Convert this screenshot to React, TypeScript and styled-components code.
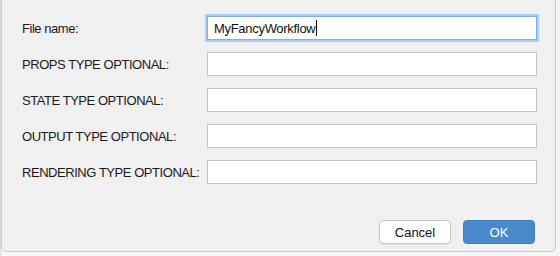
import React from "react";
import styled, { createGlobalStyle } from "styled-components";

const GlobalStyle = createGlobalStyle`
  html, body {
    margin: 0;
    padding: 0;
    background: #f6f6f6;
  }
  body {
    font-family: "Liberation Sans", Arial, sans-serif;
  }
`;

const Page = styled.div`
  width: 560px;
  height: 256px;
  display: flex;
  background: linear-gradient(to right, #dcdcd4 0 1px, #f6f6f6 1px);
`;

const Dialog = styled.div`
  margin-left: 1px;
  width: 555px;
  height: 252px;
  box-sizing: border-box;
  background: #f0f0f0;
  border: 1px solid #c9c9c9;
  border-top: none;
  border-radius: 0 0 5px 5px;
  display: flex;
  flex-direction: column;
  padding: 16px 17px 7px 20px;
`;

const Form = styled.div`
  display: grid;
  grid-template-columns: 185px 330px;
  row-gap: 12px;
  align-items: center;
`;

const Label = styled.label`
  font-size: 13px;
  letter-spacing: -0.45px;
  color: #1a1a1a;
  white-space: nowrap;
  overflow: hidden;
`;

const Input = styled.div<{ $focused?: boolean }>`
  height: 24px;
  box-sizing: border-box;
  background: #fff;
  border: 1px solid ${(p) => (p.$focused ? "#7fb0ec" : "#c4c4c4")};
  box-shadow: ${(p) => (p.$focused ? "0 0 0 2px #a9cdf5" : "none")};
  display: flex;
  align-items: center;
  padding-left: 6px;
  font-size: 13px;
  letter-spacing: -0.3px;
  color: #111;
`;

const Caret = styled.span`
  display: inline-block;
  width: 1px;
  height: 16px;
  background: #111;
  margin-left: 1px;
`;

const Footer = styled.div`
  margin-top: auto;
  display: flex;
  justify-content: flex-end;
  gap: 12px;
  padding-right: 3px;
`;

const Button = styled.button<{ $primary?: boolean }>`
  width: 72px;
  height: 24px;
  border-radius: 4px;
  font-family: "Liberation Sans", Arial, sans-serif;
  font-size: 13px;
  cursor: pointer;
  border: 1px solid ${(p) => (p.$primary ? "#3f7dc0" : "#c6c6c6")};
  background: ${(p) => (p.$primary ? "#4a89ca" : "#fff")};
  color: ${(p) => (p.$primary ? "#fff" : "#111")};
  box-shadow: ${(p) => (p.$primary ? "none" : "0 1px 0 rgba(0,0,0,0.05)")};
`;

const fields = [
  "PROPS TYPE OPTIONAL:",
  "STATE TYPE OPTIONAL:",
  "OUTPUT TYPE OPTIONAL:",
  "RENDERING TYPE OPTIONAL:",
];

export default function App() {
  return (
    <Page>
      <GlobalStyle />
      <Dialog>
        <Form>
          <Label>File name:</Label>
          <Input $focused>
            MyFancyWorkflow
            <Caret />
          </Input>
          {fields.map((f) => (
            <React.Fragment key={f}>
              <Label>{f}</Label>
              <Input />
            </React.Fragment>
          ))}
        </Form>
        <Footer>
          <Button>Cancel</Button>
          <Button $primary>OK</Button>
        </Footer>
      </Dialog>
    </Page>
  );
}
